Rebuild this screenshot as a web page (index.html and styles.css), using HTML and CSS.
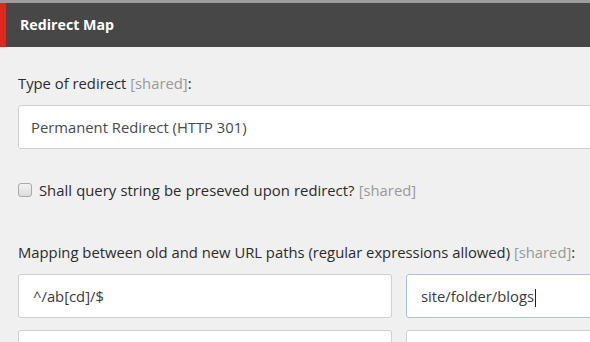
FILE: index.html
```html
<!DOCTYPE html>
<html lang="en">
<head>
<meta charset="utf-8">
<title>Redirect Map</title>
<link rel="stylesheet" href="styles.css">
</head>
<body>
<div class="page">
  <div class="topline"></div>
  <header class="header">
    <div class="accent"></div>
    <h1 class="title">Redirect Map</h1>
  </header>
  <main class="content">
    <div class="field-label">Type of redirect <span class="shared">[shared]</span>:</div>
    <div class="select">Permanent Redirect (HTTP 301)</div>

    <label class="check-row">
      <span class="checkbox"></span>
      <span class="check-text">Shall query string be preseved upon redirect? <span class="shared">[shared]</span></span>
    </label>

    <div class="field-label mapping-label">Mapping between old and new URL paths (regular expressions allowed) <span class="shared">[shared]</span>:</div>
    <div class="grid">
      <div class="input">^/ab[cd]/$</div>
      <div class="input focused">site/folder/blogs<span class="caret"></span></div>
      <div class="input"></div>
      <div class="input"></div>
    </div>
  </main>
</div>
</body>
</html>
```

FILE: styles.css
```css
html, body {
  margin: 0;
  padding: 0;
  overflow: hidden;
  background: #f0f0f0;
}
body {
  font-family: "Open Sans", "Noto Sans", sans-serif;
  font-size: 14.8px;
  line-height: 20px;
  color: #2b2b2b;
}
.page {
  width: 780px;
}
.topline {
  height: 3px;
  background: #9d9d9d;
}
.header {
  display: flex;
  height: 44px;
  background: #474747;
}
.accent {
  width: 6px;
  background: #dc291e;
}
.title {
  margin: 0;
  padding-left: 14px;
  font-size: 14.2px;
  font-weight: 700;
  color: #ffffff;
  line-height: 44px;
}
.content {
  padding: 26px 0 0 18px;
}
.field-label {
  margin-bottom: 12px;
}
.shared {
  color: #999999;
}
.select {
  box-sizing: border-box;
  height: 44px;
  background: #fff;
  border: 1px solid #cfcfcf;
  border-radius: 3px;
  padding: 0 12px;
  line-height: 42px;
  color: #4a4a4a;
}
.check-row {
  display: flex;
  align-items: center;
  gap: 7px;
  margin-top: 31px;
}
.check-text {
  word-spacing: 0.5px;
}
.checkbox {
  box-sizing: border-box;
  width: 14px;
  height: 14px;
  border: 1px solid #a9a9a9;
  border-radius: 3px;
  background: linear-gradient(#f2f2f2, #dcdcdc);
}
.mapping-label {
  margin-top: 42px;
}
.grid {
  display: grid;
  grid-template-columns: 374px 374px;
  column-gap: 14px;
  row-gap: 12px;
}
.input {
  box-sizing: border-box;
  height: 44px;
  background: #fff;
  border: 1px solid #d0d0d0;
  border-radius: 3px;
  padding: 0 14px;
  line-height: 42px;
  color: #3a3a3a;
}
.input.focused {
  border-color: #a9c3df;
}
.caret {
  display: inline-block;
  width: 1px;
  height: 18px;
  background: #222;
  vertical-align: middle;
  margin-left: 1px;
}
```
